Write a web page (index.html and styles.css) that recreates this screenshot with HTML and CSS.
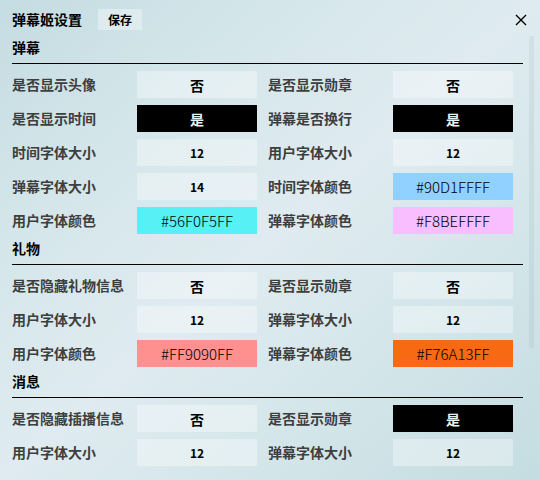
FILE: index.html
```html
<!DOCTYPE html>
<html lang="zh-CN">
<head>
<meta charset="utf-8">
<meta name="viewport" content="width=device-width, initial-scale=1">
<title>弹幕姬设置</title>
<link rel="stylesheet" href="styles.css">
</head>
<body>
<header class="titlebar">
  <h1 class="title">弹幕姬设置</h1>
  <button class="save" type="button">保存</button>
  <button class="close" type="button" aria-label="关闭">
    <svg width="12" height="12" viewBox="0 0 12 12" aria-hidden="true"><path d="M1 1l10 10M11 1l-10 10" fill="none" stroke="#000" stroke-width="1.4"/></svg>
  </button>
</header>
<main class="settings">
  <section>
    <h2 class="heading">弹幕</h2>
    <div class="grid">
      <div class="row"><label for="d1">是否显示头像</label><button class="field" id="d1" type="button">否</button></div>
      <div class="row"><label for="d2">是否显示勋章</label><button class="field" id="d2" type="button">否</button></div>
      <div class="row"><label for="d3">是否显示时间</label><button class="field on" id="d3" type="button">是</button></div>
      <div class="row"><label for="d4">弹幕是否换行</label><button class="field on" id="d4" type="button">是</button></div>
      <div class="row"><label for="d5">时间字体大小</label><input class="field number" id="d5" type="text" value="12"></div>
      <div class="row"><label for="d6">用户字体大小</label><input class="field number" id="d6" type="text" value="12"></div>
      <div class="row"><label for="d7">弹幕字体大小</label><input class="field number" id="d7" type="text" value="14"></div>
      <div class="row"><label for="d8">时间字体颜色</label><button class="field color blue" id="d8" type="button">#90D1FFFF</button></div>
      <div class="row"><label for="d9">用户字体颜色</label><button class="field color cyan" id="d9" type="button">#56F0F5FF</button></div>
      <div class="row"><label for="d10">弹幕字体颜色</label><button class="field color pink" id="d10" type="button">#F8BEFFFF</button></div>
    </div>
  </section>
  <section>
    <h2 class="heading">礼物</h2>
    <div class="grid">
      <div class="row"><label for="g1">是否隐藏礼物信息</label><button class="field" id="g1" type="button">否</button></div>
      <div class="row"><label for="g2">是否显示勋章</label><button class="field" id="g2" type="button">否</button></div>
      <div class="row"><label for="g3">用户字体大小</label><input class="field number" id="g3" type="text" value="12"></div>
      <div class="row"><label for="g4">弹幕字体大小</label><input class="field number" id="g4" type="text" value="12"></div>
      <div class="row"><label for="g5">用户字体颜色</label><button class="field color red" id="g5" type="button">#FF9090FF</button></div>
      <div class="row"><label for="g6">弹幕字体颜色</label><button class="field color orange" id="g6" type="button">#F76A13FF</button></div>
    </div>
  </section>
  <section>
    <h2 class="heading">消息</h2>
    <div class="grid">
      <div class="row"><label for="m1">是否隐藏插播信息</label><button class="field" id="m1" type="button">否</button></div>
      <div class="row"><label for="m2">是否显示勋章</label><button class="field on" id="m2" type="button">是</button></div>
      <div class="row"><label for="m3">用户字体大小</label><input class="field number" id="m3" type="text" value="12"></div>
      <div class="row"><label for="m4">弹幕字体大小</label><input class="field number" id="m4" type="text" value="12"></div>
    </div>
  </section>
</main>
<div class="scroll-thumb"></div>
</body>
</html>
```
FILE: styles.css
```css
* {
  box-sizing: border-box;
}

body {
  margin: 0;
  min-height: 100vh;
  font: 700 14px/20px "Noto Sans", "Noto Sans CJK SC", sans-serif;
  color: #000;
  background: linear-gradient(to bottom right, #c4dce2, #d4e6ea 25%, #dfebf0 50%, #d4e6ea 72%, #c4dce1);
}

button,
input {
  margin: 0;
  padding: 0;
  border: 0;
  border-radius: 0;
  font: inherit;
  color: inherit;
}

.titlebar {
  display: flex;
  align-items: center;
  gap: 16px;
  padding: 9px 12px 3px;
}

.title,
.heading {
  margin: 0;
  font-size: 14px;
}

.save {
  height: 21px;
  padding: 0 10px;
  font-family: "Noto Sans CJK SC", sans-serif;
  font-size: 12px;
  background: rgba(255, 255, 255, .35);
}

.close {
  display: flex;
  margin-left: auto;
  padding: 1px;
  background: none;
}

.settings {
  padding: 0 17px 12px 12px;
}

.heading {
  line-height: 30px;
  border-bottom: 1px solid #000;
}

.grid {
  display: grid;
  grid-template-columns: 1fr 1fr;
  gap: 7px 11px;
  padding: 7px 10px 0 0;
}

.row {
  display: flex;
  align-items: center;
  justify-content: space-between;
}

.row label {
  color: #3e3e3e;
}

.field {
  width: 120px;
  height: 27px;
  font-family: "Noto Sans CJK SC", sans-serif;
  text-align: center;
  background: rgba(255, 255, 255, .35);
}

.number {
  font-size: 12px;
}

.on {
  color: #e6f2f6;
  background: #000;
}

.color {
  font-size: 15px;
  font-weight: 300;
}

.blue { background: #90d1ff; }
.cyan { background: #56f0f5; }
.pink { background: #f8beff; }
.red { background: #ff9090; }
.orange { background: #f76a13; }

.scroll-thumb {
  position: absolute;
  top: 36px;
  right: 6px;
  width: 5px;
  height: 65vh;
  background: rgba(0, 40, 50, .05);
}
```
